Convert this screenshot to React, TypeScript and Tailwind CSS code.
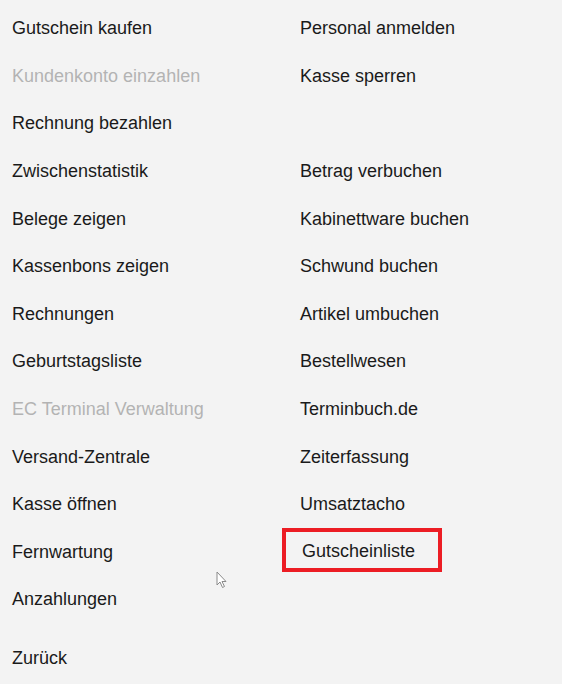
const left = [
  { label: "Gutschein kaufen" },
  { label: "Kundenkonto einzahlen", disabled: true },
  { label: "Rechnung bezahlen" },
  { label: "Zwischenstatistik" },
  { label: "Belege zeigen" },
  { label: "Kassenbons zeigen" },
  { label: "Rechnungen" },
  { label: "Geburtstagsliste" },
  { label: "EC Terminal Verwaltung", disabled: true },
  { label: "Versand-Zentrale" },
  { label: "Kasse öffnen" },
  { label: "Fernwartung" },
  { label: "Anzahlungen" },
]

const right = [
  "Personal anmelden",
  "Kasse sperren",
  "",
  "Betrag verbuchen",
  "Kabinettware buchen",
  "Schwund buchen",
  "Artikel umbuchen",
  "Bestellwesen",
  "Terminbuch.de",
  "Zeiterfassung",
  "Umsatztacho",
  "Gutscheinliste",
]

function Cursor() {
  return (
    <svg className="absolute left-[216px] top-[571px]" width="12" height="18" viewBox="0 0 12 18">
      <path
        d="M1 1 L1 14 L4 11 L6.5 16.5 L8.5 15.5 L6 10.5 L10 10.5 Z"
        fill="#ffffff"
        stroke="#8a8a8a"
        strokeWidth="1"
        strokeLinejoin="round"
      />
    </svg>
  )
}

export default function App() {
  return (
    <div
      className="relative w-[562px] h-[684px] bg-[#f3f3f3] overflow-hidden text-[18px] text-[#1a1a1a]"
      style={{ fontFamily: '"Liberation Sans", Arial, sans-serif' }}
    >
      <div className="flex pt-[5px]">
        {/* left column */}
        <div className="w-[300px] pl-[12px] flex flex-col">
          {left.map((item) => (
            <div
              key={item.label}
              className={`h-[47.6px] flex items-center ${item.disabled ? "text-[#b3b3b3]" : ""}`}
            >
              {item.label}
            </div>
          ))}
          <div className="h-[48px] flex items-center mt-[11px]">Zurück</div>
        </div>

        {/* right column */}
        <div className="flex flex-col">
          {right.map((label, i) =>
            label === "Gutscheinliste" ? (
              <div key={i} className="h-[47.6px] flex items-center">
                <div className="-ml-[18px] -mt-[4px] w-[160px] h-[44px] border-[4px] border-[#ec1c24] flex items-center pl-[16px] pt-[3px]">
                  {label}
                </div>
              </div>
            ) : (
              <div key={i} className="h-[47.6px] flex items-center">
                {label}
              </div>
            )
          )}
        </div>
      </div>
      <Cursor />
    </div>
  )
}
